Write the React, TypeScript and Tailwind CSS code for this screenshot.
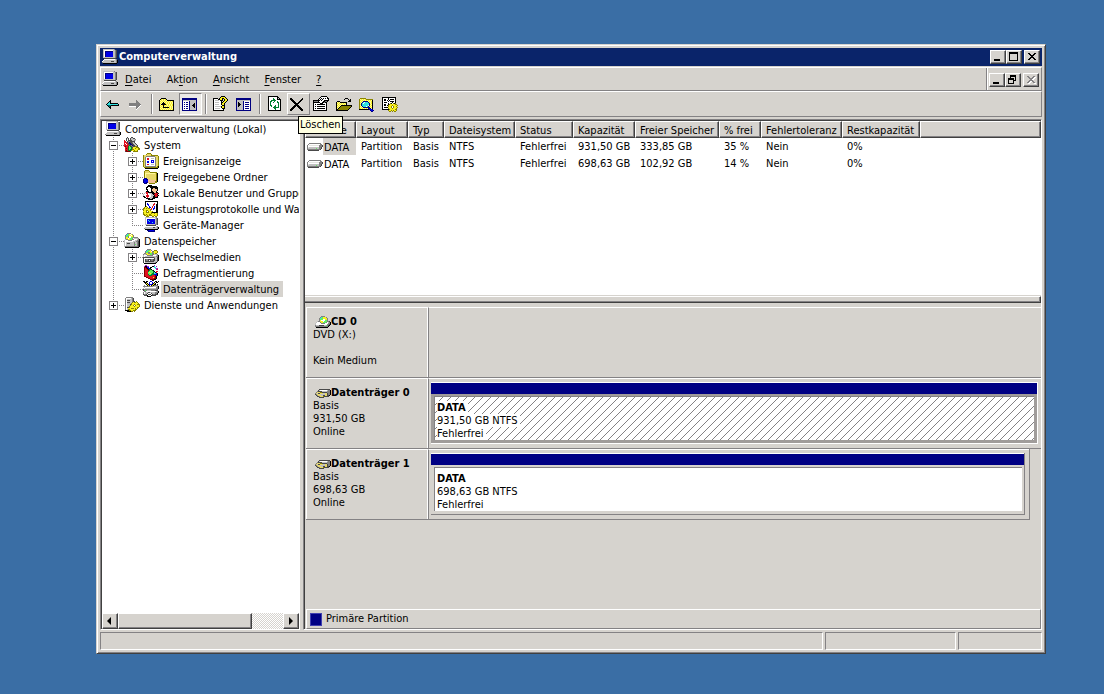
import React from "react";

const PALETTE: Record<string, string> = {
  k: "#000000",
  d: "#484848",
  w: "#ffffff",
  g: "#808080",
  l: "#c0c0c0",
  s: "#e4e4e0",
  b: "#0000e8",
  n: "#000080",
  y: "#f8f020",
  Y: "#fffa9a",
  o: "#8a8400",
  f: "#e8d868",
  c: "#30e0e0",
  t: "#006868",
  r: "#e01020",
  R: "#800000",
  m: "#a020c0",
  e: "#008030",
  L: "#60f060",
  p: "#f4c090",
};

const ICONS: Record<string, string[]> = {
  computer: [
    ".lllllllllllg...",
    ".lwwwwwwwwwllgd.",
    ".lwnnnnnnnnllgd.",
    ".lwnbbbbbbbllgd.",
    ".lwnbbbbbbbllgd.",
    ".lwnbbbbbbbllgd.",
    ".lwnbbbbbbbllgd.",
    ".lwnbbbbbbbllgd.",
    ".llllllllllllgd.",
    "..dddddddddddd..",
    "..wwwwwwwwwwwlg.",
    ".wllllllllllllgk",
    "wlllllllldddllgk",
    "glllllllllllllgk",
    ".kkkkkkkkkkkkkk.",
    "................",
  ],
  back: [
    "................",
    "................",
    "................",
    ".....k..........",
    "....kk..........",
    "...kck..........",
    "..kcckkkkkkkk...",
    ".kccccccccccck..",
    "..ktttkkkkkkkk..",
    "...ktk..........",
    "....kk..........",
    ".....k..........",
    "................",
    "................",
  ],
  forward: [
    "................",
    "................",
    "................",
    "........g.......",
    "........gg......",
    "........ggg.....",
    ".ggggggggggg....",
    ".gggggggggggg...",
    ".gggggggggggw...",
    ".wwwwwwwgggw....",
    "........ggw.....",
    "........gw......",
    "........w.......",
    "................",
  ],
  up: [
    "................",
    "..kkkkk.........",
    ".kyYyYyk........",
    "kYyYyYyYkkkkkkk.",
    "kyYyYyYyYyYyYyk.",
    "kYyYkYyYyYyYyYk.",
    "kyYkkkyYyYyYyYk.",
    "kYkkkkkyYyYyYyk.",
    "kyYykyYyYyYyYyk.",
    "kYyYkYyYyYyYyYk.",
    "kyYykkkkkkyYyYk.",
    "kYyYyYyYyYyYyYk.",
    "kyYyYyYyYyYyYyk.",
    "kkkkkkkkkkkkkkk.",
    "................",
  ],
  tree: [
    "................",
    "nnnnnnnnnnnnnnn.",
    "nnnnnnnnnnnnnnn.",
    "nllllllllllllln.",
    "nwwwwwwnlllllln.",
    "nwnwnnwnlllllln.",
    "nwwwwwwnllllkln.",
    "nwnwnnwnlllkkln.",
    "nwwwwwwnllkkkln.",
    "nwnwnnwnlllkkln.",
    "nwwwwwwnllllkln.",
    "nwnwnnwnlllllln.",
    "nwwwwwwnlllllln.",
    "nnnnnnnnnnnnnnn.",
    "................",
  ],
  help: [
    "........kkkk....",
    ".......kyyyyk...",
    "kkkkk.kyykkyyk..",
    "kwwwwkkyyk.kyyk.",
    "kwllllwkkk.kyyk.",
    "kwwwwwwwk.kyyk..",
    "kwllllwwkkyyk...",
    "kwwwwwwwkyyk....",
    "kwllllwwkyyk....",
    "kwwwwwwwwkkk....",
    "kwllllllkyyk....",
    "kwwwwwwwkyyk....",
    "kwlllllwwkkk....",
    "kwwwwwwwwwk.....",
    "kkkkkkkkkkk.....",
    "................",
  ],
  pane: [
    "................",
    "nnnnnnnnnnnnnnn.",
    "nnnnnnnnnnnnnnn.",
    "nllllllllllllln.",
    "nllllllnwwwwwwn.",
    "nlkllllnwnnnnwn.",
    "nlkklllnwwwwwwn.",
    "nlkkkllnwnnnnwn.",
    "nlkklllnwwwwwwn.",
    "nlkllllnwnnnnwn.",
    "nllllllnwwwwwwn.",
    "nllllllnwnnnnwn.",
    "nllllllnwwwwwwn.",
    "nnnnnnnnnnnnnnn.",
    "................",
  ],
  refresh: [
    ".kkkkkkkkkk.....",
    ".kwwwwwwwwkk....",
    ".kwwwwewwwklk...",
    ".kwwwweewwkkkk..",
    ".kwweeeeewwwwk..",
    ".kweewwewwewwk..",
    ".kwewwewwweewk..",
    ".kwewwwwwwwewk..",
    ".kwewwwwwwwewk..",
    ".kweewwwewwewk..",
    ".kwwewweewwewk..",
    ".kwwwweeeeeewk..",
    ".kwwwwweewwwwk..",
    ".kwwwwwwewwwwk..",
    ".kkkkkkkkkkkkk..",
    "................",
  ],
  remove: [
    "................",
    "kk..........k...",
    "kkk........kk...",
    ".kkk......kk....",
    "..kkk....kk.....",
    "...kkk..kk......",
    "....kkkkk.......",
    ".....kkk........",
    "....kkkkk.......",
    "...kkk.kkk......",
    "..kkk...kkk.....",
    ".kkk.....kkk....",
    "kkk.......kkk...",
    "kk.........kk...",
    "................",
  ],
  properties: [
    "........kkkkkk..",
    ".......kwwwwwwk.",
    "......kwkwkwkwkk",
    ".....kwkwkwwwwwk",
    "kkkkkkkwkwwkkkkk",
    "kggggkwwwwkkggk.",
    "kkkkkkkwwkkgkk..",
    "kwwwwwwkkkwwwk..",
    "kwkwkkkkkkkkwk..",
    "kwwwwwwwwwwwwk..",
    "kwkwkkkkkkkkwk..",
    "kwwwwwwwwwwwwk..",
    "kwkwkkkkkkkkwk..",
    "kwwwwwwwwwwwwk..",
    "kkkkkkkkkkkkkk..",
    "................",
  ],
  open: [
    "................",
    ".........kkk....",
    "........k...k.k.",
    ".............kk.",
    ".kkk........kkk.",
    "kYyYkkkkkkk.....",
    "kyYyYyYyYyk.....",
    "kYyYyYyYyYk.....",
    "kyYyYkkkkkkkkkkk",
    "kYyYkooooooooook",
    "kyYkooooooooook.",
    "kYkooooooooook..",
    "kkooooooooook...",
    "kkkkkkkkkkkk....",
    "................",
  ],
  search: [
    "................",
    ".oooooo.........",
    "oYyYyYyooooooo..",
    "oyYyYyYyYyYyYk..",
    "oYyYnnnnnYyYyk..",
    "oyYncwcccnyYyk..",
    "oYncwcccccnYyk..",
    "oyncccccccnyYk..",
    "oYnccccccwnYyk..",
    "oyYncccwcnyyYk..",
    "oYyYnnnnnnnYyk..",
    "oyYyYyYyYnbnYk..",
    "kkkkkkkkkknbbn..",
    "...........nbbn.",
    "............nn..",
  ],
  settings: [
    "kkkkkkkkkkkkkk..",
    "kwwwwwkwwwwwwk..",
    "kwkkwwkwkkkkwk..",
    "kwkkwkwkwwwwwk..",
    "kwwwwwkwkkkkwk..",
    "kwkkkwwwwwkwwk..",
    "kwwwwwkwokwoko..",
    "kwkkwwkoyyyyyoo.",
    "kwkkwkoyyyoyyyyo",
    "kwwwwwoyyowoyyo.",
    "kwkkkkyyyowoyyyo",
    "kwwwwwoyyyoyyyo.",
    "kkkkkkkoyyyyyoo.",
    "......oyyoyoyyo.",
    ".......oo.o.oo..",
  ],
  system: [
    "...d...dd.......",
    "..dld.dlldd.....",
    "..dwd.dllllg....",
    "r.dwddddllgl....",
    "rr.dggddddd.....",
    "rrrdgnddgld.....",
    "rwrrdnnddlld....",
    "rrwrddnnddlld...",
    "rrrrredgnddlld..",
    "rRrreLedgddood..",
    ".rrreLLedyyyooo.",
    ".rRreLLeoyyoyyoo",
    ".rrreLeeooyyyyoo",
    ".rRreeeoyyoyyo..",
    ".dRRRRd..ooooo..",
    "................",
  ],
  events: [
    "....oooo........",
    "...offffo.......",
    "offfffffooooooo.",
    "offgggggggggfffo",
    "ofgwwwwwwwwwgffo",
    "ofgwrrwwlllwgffo",
    "ofgwrrwwwwwwgffo",
    "ofgwwwwwbbbwgffo",
    "ofgwbbwwbwbwgffo",
    "ofgwbbwwbbbwgffo",
    "ofgwwwwwwwwwgffo",
    "ofgwrrwwlllwgffo",
    "ofgwwwwwwwwwgffo",
    "ofgggggggggggfok",
    ".ooooooooooooook",
    "..kkkkkkkkkkkkk.",
  ],
  shared: [
    "................",
    "..oooo..........",
    ".offffo.........",
    ".offfffooooooo..",
    ".oYYYYYYYYYYfok.",
    ".oYffffffffffok.",
    ".oYffffffffffok.",
    ".oYffffffffffok.",
    ".oYffffffffffok.",
    ".nnnfffffffffok.",
    "nbbnnpppfffffok.",
    "nbbbbppppppppok.",
    "nbbbbpppppppook.",
    "nbbnnpppppppoo..",
    ".nnn..oooooo....",
    "................",
  ],
  users: [
    ".....kkkk.......",
    "....kkkkkkkkkk..",
    "...kkwwkkkkkkkk.",
    "...kwwwwkkppkkk.",
    "...kkwwwkpppppk.",
    "....kwwwkpppppk.",
    "...kkkwwkkpppk..",
    "..lrrkkkkkkppkk.",
    ".lwrrwlllkkkrrrk",
    "lwwwrwwwllkrrrk.",
    "lwwrrrwwlllkrrrk",
    "kkwrrrwwllkkrrk.",
    ".kkwrwwlllkkkkk.",
    "...kkkkllkkk....",
    ".....kkkkk......",
    "................",
  ],
  performance: [
    "..kkkkkkkkkkkkk.",
    "..kwwwwwwwwwwwk.",
    "..kwbwwwwwwrwwk.",
    "..kwbbwwwwrrwkk.",
    "..kwwbwwwwrwwkk.",
    "..kowwbwwrwbwkk.",
    ".oyyowbbwrwbwkk.",
    "ooyoyoowrwbbwkk.",
    "oyyyyyyorwbwwkk.",
    "oyyooyyowwwwwkk.",
    "yyyowoyyyowwwkk.",
    "oyyoooyyokkkkkk.",
    "oyyyyyyyoyyoyyo.",
    "ooyoyyooyyyyyyo.",
    ".ooyoyoooyyoyyo.",
    "...ooo...oo.oo..",
  ],
  device: [
    "..lllllllllllg..",
    "..lwwwwwwwwwlgd.",
    "..lwbbbbbbbblgd.",
    "..lwbcbbbbbblgd.",
    "..lwbbcbbbbblgd.",
    "..lwbbbbbcbblgd.",
    "..lwbbbbbbbblgd.",
    "..llllllllllggd.",
    "...dddddddddd...",
    "..wwwwwwwwwwwlg.",
    ".wllllllllddllgk",
    ".gllllllllllllgk",
    "..kkkkkkkkkkkkk.",
    "....nnbbbbbn....",
    ".....nnnnnnn....",
    "................",
  ],
  storage: [
    "...gggg.........",
    "..gcLywyg.......",
    ".gcLLyywyg......",
    ".gLLgwwyyg......",
    ".gyygwwLLggggg..",
    ".gyywyLLgwllllg.",
    ".lggyyLLggwwwlgk",
    "lwwwggggwwwllggk",
    "lwwwwwwwwlllggdk",
    "lwllllllllgllgdk",
    "lwldddllllgllgdk",
    "lwllllllllgLlgdk",
    "lwllllllllgllgdk",
    "lgggggggggggggdk",
    ".kkkkkkkkkkkkkk.",
    "................",
  ],
  removable: [
    "....gggg........",
    "...gcLLyg..ooo..",
    "..gcLLyywgoyyyo.",
    "..gLLggyygLyyyo.",
    ".ggyyggLLggyoo..",
    "gllgyyyLLgglllg.",
    "lwwwggggggwwwlgk",
    "lwlllllllllllggk",
    "dddddddddddglldk",
    "dwwwwwwwwwwdlldk",
    "dwdggdddggddlldk",
    "dwdggdwdggddlldk",
    "dwdddddddddllld.",
    "dwllllllllllgk..",
    ".kkkkkkkkkkkk...",
    "................",
  ],
  defrag: [
    "..mm.......m....",
    ".mkkmm...kkc.m..",
    ".RRkbb.kk..cc...",
    ".RrRkbbk....cmm.",
    ".RrrRkeek....mr.",
    ".RrrrReLLek.....",
    ".RrrreLLLLek.rr.",
    ".RrrrLyLLLeckr..",
    ".RrrrLLyLeeccbk.",
    ".RrrreLLeeebbbk.",
    ".RrrrreeerrrRbk.",
    ".RRrrrrrrrrrRk..",
    "...RRrrrrryrRk..",
    ".....RRrrrrRRk..",
    ".......RRRRkk...",
    ".........kk.....",
  ],
  disks: [
    "kk.kk..bb...kk.k",
    ".kkk..bwwb.kwkk.",
    "..kyk.bwwbkyk...",
    "...kykbbbkykk.k.",
    ".g..kyk.kykgggg.",
    "ggggggggggllllgk",
    ".lwwwwwwwwwwwggk",
    "lwlllllllllllggk",
    "dgggggggggggggd.",
    "dgLgllllggggddd.",
    ".ggwwwwwwwwwwlgk",
    "gwlllddlllllgggk",
    "gwlldwwwdlllggk.",
    "dggdwdddwdggddd.",
    ".dddkwwwkdddd...",
    "....kkkk........",
  ],
  services: [
    "..ggggggg.......",
    ".gwwwwwlgd......",
    ".gwlllllgd......",
    ".gwdddllgd......",
    ".gwlllllgdd.o...",
    ".gwdddlloyooyo..",
    ".gwlllloyyyyyyo.",
    ".gwllldoyyoyyooo",
    ".gwllloyyowoyyyo",
    ".gwlloyyyyoyyyyo",
    ".gwddoyyyyyyyoo.",
    ".gwlyyyoooyoyo..",
    ".gwlooyyyyyoo...",
    ".kkkkooyyooo....",
    "...kkkkoo.o.....",
    "................",
  ],
  cd: [
    "......gggg......",
    ".....gcLyyyg....",
    "....gcLLyyyyg...",
    "....gLLLwwyyg...",
    "....gywwwwLLg...",
    "..lggyyywLLLggd.",
    ".lwwwgyyLLLgwlgk",
    "lwwwwwggggwwwggk",
    "lwwwwwwwwwwwggdk",
    "gllldddddllLgdk.",
    "gggggggggggggk..",
    ".kkkkkkkkkkkk...",
  ],
  disk: [
    "................",
    "....ddddddddddd.",
    "...dlwwwwwwwlggk",
    "..gddddlllllgggk",
    ".gfffoodddddgggk",
    "gflddfffllffdggk",
    "dgffflllllffdggk",
    ".dgfffllddffddk.",
    "..ddgfffoddddd..",
    "....ddddd.......",
  ],
  volume: [
    "..gggggggggggg..",
    ".gwwwwwwwwwwwgg.",
    "gwssssssssssgggd",
    "gwwwwwwwwwwwgggd",
    "gsllllllllllggd.",
    "gllllllllLllggd.",
    "gggggggggggggd..",
    ".ddddddddddd....",
  ],
};

function Icon({ name, className = "" }: { name: string; className?: string }) {
  const rows = ICONS[name];
  const width = 16;
  const rects: React.ReactNode[] = [];
  rows.forEach((row, y) => {
    let x = 0;
    while (x < row.length) {
      let end = x + 1;
      while (end < row.length && row[end] === row[x]) end += 1;
      if (row[x] !== ".") {
        rects.push(<rect key={`${x}-${y}`} x={x} y={y} width={end - x} height={1} fill={PALETTE[row[x]]} />);
      }
      x = end;
    }
  });
  return (
    <svg
      aria-hidden="true"
      width={width}
      height={rows.length}
      viewBox={`0 0 ${width} ${rows.length}`}
      shapeRendering="crispEdges"
      className={`block shrink-0 ${className}`}
    >
      {rects}
    </svg>
  );
}

const RAISED =
  "border border-t-white border-l-white border-r-[#404040] border-b-[#404040] bg-[#d6d3ce] shadow-[inset_-1px_-1px_0_#848284]";
const THIN_RAISED = "border border-t-white border-l-white border-r-[#848284] border-b-[#848284]";
const THIN_SUNKEN = "border border-t-[#848284] border-l-[#848284] border-r-white border-b-white";
const INNER_SUNKEN = "border-t border-l border-[#404040]";

function WindowButton({ label, glyph, disabled = false }: { label: string; glyph: string; disabled?: boolean }) {
  return (
    <button
      type="button"
      aria-label={label}
      disabled={disabled}
      className={`flex h-[14px] w-4 items-center justify-center ${RAISED}`}
    >
      <svg width="12" height="10" viewBox="0 0 12 10" shapeRendering="crispEdges" fill="#000" className="block shrink-0">
        {glyph === "min" && <rect x="2" y="7" width="6" height="2" />}
        {glyph === "max" && <path fillRule="evenodd" d="M1 0h9v9h-9zM2 2h7v6h-7z" />}
        {glyph === "restore" && (
          <path fillRule="evenodd" d="M3 0h6v6h-2v-1h1v-3h-4v1h-1zM1 3h6v6h-6zM2 5h4v3h-4z" />
        )}
        {glyph === "close" && (
          <g>
            {disabled && (
              <path
                transform="translate(1 1)"
                fill="#fff"
                d="M2 1h2v1h1v1h2v-1h1v-1h2v1h-1v1h-1v1h-1v1h1v1h1v1h1v1h-2v-1h-1v-1h-2v1h-1v1h-2v-1h1v-1h1v-1h1v-1h-1v-1h-1v-1h-1z"
              />
            )}
            <path
              fill={disabled ? "#848284" : "#000"}
              d="M2 1h2v1h1v1h2v-1h1v-1h2v1h-1v1h-1v1h-1v1h1v1h1v1h1v1h-2v-1h-1v-1h-2v1h-1v1h-2v-1h1v-1h1v-1h1v-1h-1v-1h-1v-1h-1z"
            />
          </g>
        )}
      </svg>
    </button>
  );
}

function ToolButton({ icon, label, look = "flat" }: { icon: string; label: string; look?: string }) {
  const style =
    look === "pressed"
      ? "border border-t-[#848284] border-l-[#848284] border-r-white border-b-white bg-[#ebe9e6]"
      : look === "hover"
        ? THIN_RAISED
        : "border border-transparent";
  return (
    <button type="button" aria-label={label} className={`flex h-[22px] w-[23px] items-center pl-0.5 ${style}`}>
      <Icon name={icon} />
    </button>
  );
}

function ToolSeparator() {
  return (
    <div className="flex w-2 justify-center">
      <div className="h-5 w-0.5 border-l border-l-[#848284] border-r border-r-white" />
    </div>
  );
}

type Node = {
  label: string;
  icon: string;
  box: "plus" | "minus" | "none";
  up: boolean;
  down: boolean;
  level: number;
  selected?: boolean;
};

const TREE: Node[] = [
  { label: "System", icon: "system", box: "minus", up: true, down: true, level: 1 },
  { label: "Ereignisanzeige", icon: "events", box: "plus", up: true, down: true, level: 2 },
  { label: "Freigegebene Ordner", icon: "shared", box: "plus", up: true, down: true, level: 2 },
  { label: "Lokale Benutzer und Gruppen", icon: "users", box: "plus", up: true, down: true, level: 2 },
  { label: "Leistungsprotokolle und Warnungen", icon: "performance", box: "plus", up: true, down: true, level: 2 },
  { label: "Geräte-Manager", icon: "device", box: "none", up: true, down: false, level: 2 },
  { label: "Datenspeicher", icon: "storage", box: "minus", up: true, down: true, level: 1 },
  { label: "Wechselmedien", icon: "removable", box: "plus", up: true, down: true, level: 2 },
  { label: "Defragmentierung", icon: "defrag", box: "none", up: true, down: true, level: 2 },
  { label: "Datenträgerverwaltung", icon: "disks", box: "none", up: true, down: false, level: 2, selected: true },
  { label: "Dienste und Anwendungen", icon: "services", box: "plus", up: true, down: false, level: 1 },
];

function Branch({ up, down, across, box }: { up: boolean; down: boolean; across: boolean; box: string }) {
  return (
    <svg
      aria-hidden="true"
      width="19"
      height="16"
      viewBox="0 0 19 16"
      shapeRendering="crispEdges"
      className="block shrink-0"
      fill="none"
      stroke="#848284"
    >
      {up && <path d="M8.5 0V8" strokeDasharray="1 1" />}
      {down && <path d="M8.5 8V16" strokeDasharray="1 1" />}
      {across && <path d="M8 8.5H19" strokeDasharray="1 1" />}
      {box !== "none" && <rect x="4.5" y="4.5" width="8" height="8" fill="#fff" />}
      {box !== "none" && <path d="M6 8.5h5" stroke="#000" />}
      {box === "plus" && <path d="M8.5 6v5" stroke="#000" />}
    </svg>
  );
}

function TreeRow({ node }: { node: Node }) {
  return (
    <li className="flex h-4 items-center">
      {node.level === 2 && <Branch up down across={false} box="none" />}
      {node.box === "none" ? (
        <Branch up={node.up} down={node.down} across box="none" />
      ) : (
        <button type="button" aria-label={`${node.label} umschalten`}>
          <Branch up={node.up} down={node.down} across box={node.box} />
        </button>
      )}
      <Icon name={node.icon} />
      <a
        href="#"
        className={`ml-0.5 h-4 pr-1 pl-0.5 leading-[18px] whitespace-nowrap ${node.selected ? "bg-[#d6d3ce]" : ""}`}
      >
        {node.label}
      </a>
    </li>
  );
}

const MENUS = [
  ["", "D", "atei"],
  ["Ak", "t", "ion"],
  ["", "A", "nsicht"],
  ["", "F", "enster"],
  ["", "?", ""],
];

const HEADERS = [
  "Volume",
  "Layout",
  "Typ",
  "Dateisystem",
  "Status",
  "Kapazität",
  "Freier Speicher",
  "% frei",
  "Fehlertoleranz",
  "Restkapazität",
  "",
];
const VOLUMES = [
  ["DATA", "Partition", "Basis", "NTFS", "Fehlerfrei", "931,50 GB", "333,85 GB", "35 %", "Nein", "0%", ""],
  ["DATA", "Partition", "Basis", "NTFS", "Fehlerfrei", "698,63 GB", "102,92 GB", "14 %", "Nein", "0%", ""],
];

function VolumeTable() {
  return (
    <table className="w-full table-fixed border-collapse text-left">
      <colgroup>
        <col className="w-[51px]" />
        <col className="w-[52px]" />
        <col className="w-[36px]" />
        <col className="w-[71px]" />
        <col className="w-[58px]" />
        <col className="w-[62px]" />
        <col className="w-[84px]" />
        <col className="w-[42px]" />
        <col className="w-[81px]" />
        <col className="w-[78px]" />
        <col />
      </colgroup>
      <thead>
        <tr>
          {HEADERS.map((h, i) => (
            <th key={i} scope="col" className="p-0 font-normal">
              <div className={`h-[17px] overflow-hidden pt-px pl-1 leading-4 whitespace-nowrap ${RAISED}`}>{h}</div>
            </th>
          ))}
        </tr>
      </thead>
      <tbody>
        {VOLUMES.map((v, r) => (
          <tr key={r} className="h-[17px]">
            {v.map((cell, i) =>
              i === 0 ? (
                <td key={i} className="p-0">
                  <div className="flex h-[17px] items-center pl-0.5">
                    <Icon name="volume" />
                    <span className={`h-[17px] flex-1 pt-px pl-px leading-[17px] ${r === 0 ? "bg-[#d6d3ce]" : ""}`}>
                      {cell}
                    </span>
                  </div>
                </td>
              ) : (
                <td key={i} className="p-0 pt-px pl-[5px] leading-4 whitespace-nowrap">
                  {cell}
                </td>
              ),
            )}
          </tr>
        ))}
      </tbody>
    </table>
  );
}

function DiskLabel({ icon, title, lines }: { icon: string; title: string; lines: string[] }) {
  return (
    <div className="w-[122px] shrink-0 border-t border-r border-l border-white pt-[7px] pl-[6px] leading-[13px]">
      <div className="flex h-[13px] items-center font-bold whitespace-nowrap">
        <Icon name={icon} className="ml-0.5" />
        {title}
      </div>
      {lines.map((line, i) => (
        <div key={i} className="h-[13px]">
          {line}
        </div>
      ))}
    </div>
  );
}

function Partition({ lines, hatched }: { lines: string[]; hatched?: boolean }) {
  return (
    <div className={`min-w-0 flex-1 pt-[3px] pl-0.5 ${hatched ? "pr-[3px]" : "pr-1"}`}>
      <div
        className={`flex h-[62px] flex-col ${
          hatched ? "border-r border-b border-white bg-[#a09c9a]" : "border-r border-b border-[#848284]"
        }`}
      >
        <div className="h-3 border-t border-white bg-[#000084]" />
        <div className={`flex flex-1 flex-col ${hatched ? "px-[3px] pt-0.5 pb-[3px]" : "pt-0.5 pr-0.5 pb-[3px] pl-[3px]"}`}>
          <div className="relative flex-1 border-t border-l border-[#848284] bg-white pt-1 pl-0.5 leading-[13px]">
            {hatched && (
              <svg aria-hidden="true" className="absolute inset-0 h-full w-full" shapeRendering="crispEdges">
                <defs>
                  <pattern id="hatch" width="8" height="8" patternUnits="userSpaceOnUse">
                    <path
                      d="M0 7h1v1h-1zM1 6h1v1h-1zM2 5h1v1h-1zM3 4h1v1h-1zM4 3h1v1h-1zM5 2h1v1h-1zM6 1h1v1h-1zM7 0h1v1h-1z"
                      fill="#848284"
                    />
                  </pattern>
                </defs>
                <rect width="100%" height="100%" fill="url(#hatch)" />
              </svg>
            )}
            {lines.map((line, i) => (
              <div key={i} className="relative flex h-[13px]">
                <span className={`bg-white pr-0.5 whitespace-nowrap ${i === 0 ? "font-bold" : ""}`}>{line}</span>
              </div>
            ))}
          </div>
        </div>
      </div>
    </div>
  );
}

function ScrollArrow({ label, points }: { label: string; points: string }) {
  return (
    <button type="button" aria-label={label} className={`flex h-4 w-4 items-center justify-center ${RAISED}`}>
      <svg width="8" height="8" viewBox="0 0 8 8" className="block">
        <polygon points={points} fill="#000" />
      </svg>
    </button>
  );
}

export default function App() {
  return (
    <div className="flex h-screen min-h-[500px] flex-col bg-[#3a6ea5] pt-11 pr-[58px] pb-10 pl-24 font-['DejaVu_Sans_Condensed','Tahoma',sans-serif] text-[11px] text-black">
      <main className="flex min-h-0 flex-1 flex-col border border-t-[#d6d3ce] border-r-[#404040] border-b-[#404040] border-l-[#d6d3ce] bg-[#d6d3ce] p-[3px] shadow-[inset_1px_1px_0_#fff,inset_-1px_-1px_0_#848284]">
        <header className="flex h-[18px] shrink-0 items-center bg-[#0a246a] pr-0.5 pl-0.5 text-white">
          <Icon name="computer" />
          <h1 className="ml-px flex-1 pt-px font-bold">Computerverwaltung</h1>
          <WindowButton label="Minimieren" glyph="min" />
          <WindowButton label="Maximieren" glyph="max" />
          <div className="w-0.5" />
          <WindowButton label="Schließen" glyph="close" />
        </header>

        <nav className={`mt-px flex h-6 shrink-0 ${THIN_RAISED}`}>
          <div className="flex flex-1 items-center border-r border-[#848284] pl-px">
            <Icon name="computer" className="mr-[7px]" />
            {MENUS.map(([pre, key, post]) => (
              <button type="button" key={key} className="mr-[15px] pt-0.5 leading-4">
                {pre}
                <u className="underline-offset-2">{key}</u>
                {post}
              </button>
            ))}
          </div>
          <div className="flex items-center border-l border-white pt-px pr-0.5 pl-px">
            <WindowButton label="Fenster minimieren" glyph="min" />
            <WindowButton label="Fenster wiederherstellen" glyph="restore" />
            <div className="w-0.5" />
            <WindowButton label="Fenster schließen" glyph="close" disabled />
          </div>
        </nav>

        <div role="toolbar" aria-label="Werkzeuge" className={`flex h-[26px] shrink-0 items-center pl-px ${THIN_RAISED}`}>
          <ToolButton icon="back" label="Zurück" />
          <ToolButton icon="forward" label="Vorwärts" />
          <ToolSeparator />
          <ToolButton icon="up" label="Aufwärts" />
          <ToolButton icon="tree" label="Konsolenstruktur" look="pressed" />
          <ToolSeparator />
          <ToolButton icon="help" label="Hilfe" />
          <ToolButton icon="pane" label="Aktionsbereich" />
          <ToolSeparator />
          <ToolButton icon="refresh" label="Aktualisieren" />
          <div className="relative">
            <ToolButton icon="remove" label="Löschen" look="hover" />
            <div
              role="tooltip"
              className="absolute top-[23px] left-[11px] z-10 border border-black bg-[#ffffe1] px-px leading-4 whitespace-nowrap"
            >
              Löschen
            </div>
          </div>
          <ToolButton icon="properties" label="Eigenschaften" />
          <ToolButton icon="open" label="Öffnen" />
          <ToolButton icon="search" label="Suchen" />
          <ToolButton icon="settings" label="Einstellungen" />
        </div>

        <div className="mt-0.5 flex min-h-0 flex-1">
          <aside className={`flex w-[200px] shrink-0 ${THIN_SUNKEN}`}>
            <div className={`flex min-w-0 flex-1 flex-col bg-white ${INNER_SUNKEN}`}>
              <div className="min-h-0 flex-1 overflow-hidden pl-[3px]">
                <div className="flex h-4 items-center">
                  <Icon name="computer" />
                  <a href="#" className="ml-1 h-4 leading-[18px] whitespace-nowrap">
                    Computerverwaltung (Lokal)
                  </a>
                </div>
                <ul>
                  {TREE.map((node) => (
                    <TreeRow key={node.label} node={node} />
                  ))}
                </ul>
              </div>
              <div className="flex h-4 shrink-0 bg-[repeating-conic-gradient(#fff_0_25%,#d6d3ce_0_50%)] bg-[size:2px_2px]">
                <ScrollArrow label="Nach links" points="5,0 5,8 1,4" />
                <div className={`w-[134px] ${RAISED}`} />
                <div className="flex-1" />
                <ScrollArrow label="Nach rechts" points="2,0 2,8 6,4" />
              </div>
            </div>
          </aside>

          <section className={`ml-[3px] flex min-w-0 flex-1 ${THIN_SUNKEN}`}>
            <div className={`flex min-w-0 flex-1 flex-col ${INNER_SUNKEN}`}>
              <div className="h-[174px] shrink-0 bg-white">
                <VolumeTable />
              </div>
              <div className="mt-px h-[7px] shrink-0 border-t border-r border-b border-t-white border-r-[#404040] border-b-[#404040] shadow-[inset_-1px_-1px_0_#848284]" />

              <div className="mt-1 flex min-h-0 flex-1 flex-col pl-px">
                <div className="flex h-[71px] shrink-0 border-b border-[#848284]">
                  <DiskLabel icon="cd" title="CD 0" lines={["DVD (X:)", "", "Kein Medium"]} />
                  <div className="flex-1 border-t border-l border-t-white border-l-[#848284]" />
                </div>
                <div className="flex h-[71px] shrink-0 border-b border-[#848284]">
                  <DiskLabel icon="disk" title="Datenträger 0" lines={["Basis", "931,50 GB", "Online"]} />
                  <div className="flex min-w-0 flex-1 border-t border-l border-t-white border-l-[#848284]">
                    <Partition hatched lines={["DATA", "931,50 GB NTFS", "Fehlerfrei"]} />
                  </div>
                </div>
                <div className="mr-[11px] flex h-[71px] shrink-0 border-r border-b border-[#848284]">
                  <DiskLabel icon="disk" title="Datenträger 1" lines={["Basis", "698,63 GB", "Online"]} />
                  <div className="flex min-w-0 flex-1 border-t border-l border-t-white border-l-[#848284]">
                    <Partition lines={["DATA", "698,63 GB NTFS", "Fehlerfrei"]} />
                  </div>
                </div>
                <div className="flex-1" />
                <div className="flex h-5 shrink-0 items-center border border-t-white border-r-[#848284] border-b-[#848284] border-l-white pl-[3px]">
                  <div className="h-[13px] w-3 border border-[#4040b0] bg-[#000084]" />
                  <span className="ml-1">Primäre Partition</span>
                </div>
              </div>
            </div>
          </section>
        </div>

        <footer className="mt-0.5 flex h-[18px] shrink-0 gap-0.5">
          <div className={`flex-1 ${THIN_SUNKEN}`} />
          <div className={`w-[131px] ${THIN_SUNKEN}`} />
          <div className={`w-[84px] ${THIN_SUNKEN}`} />
        </footer>
      </main>
    </div>
  );
}
